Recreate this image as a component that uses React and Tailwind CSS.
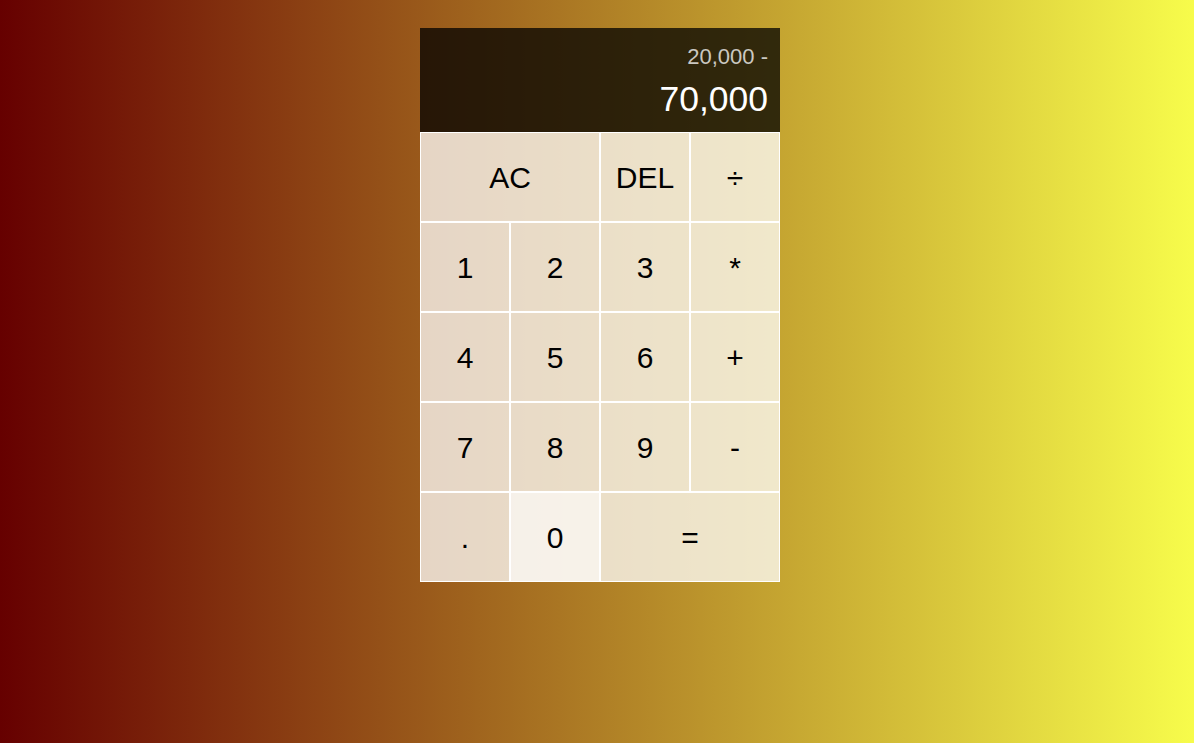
export default function App() {
  const btn =
    "cursor-pointer border border-white bg-[rgba(255,255,255,0.75)] text-[30px] text-black outline-none";
  return (
    <div
      className="flex min-h-[743px] w-full justify-center bg-linear-to-r/srgb from-[#660000] to-[#f7fc4b] pl-[6px] pt-[28px]"
      style={{ fontFamily: '"Liberation Sans", Arial, sans-serif' }}
    >
      <div className="grid h-fit w-[360px] grid-cols-[repeat(4,90px)] grid-rows-[104px_repeat(5,90px)]">
        <div className="col-span-4 flex flex-col items-end justify-around break-all bg-[rgba(0,0,0,0.75)] pb-[10px] pl-[10px] pr-[12px] pt-[12px]">
          <div className="text-[22px] text-[rgba(255,255,255,0.75)]">20,000 -</div>
          <div className="text-[35.5px] text-white">70,000</div>
        </div>
        <button className={`${btn} col-span-2`}>AC</button>
        <button className={btn}>DEL</button>
        <button className={btn}>÷</button>
        <button className={btn}>1</button>
        <button className={btn}>2</button>
        <button className={btn}>3</button>
        <button className={btn}>*</button>
        <button className={btn}>4</button>
        <button className={btn}>5</button>
        <button className={btn}>6</button>
        <button className={btn}>+</button>
        <button className={btn}>7</button>
        <button className={btn}>8</button>
        <button className={btn}>9</button>
        <button className={btn}>-</button>
        <button className={btn}>.</button>
        <button className="cursor-pointer border border-white bg-[rgba(255,255,255,0.9)] text-[30px] text-black outline-none">0</button>
        <button className={`${btn} col-span-2`}>=</button>
      </div>
    </div>
  );
}
